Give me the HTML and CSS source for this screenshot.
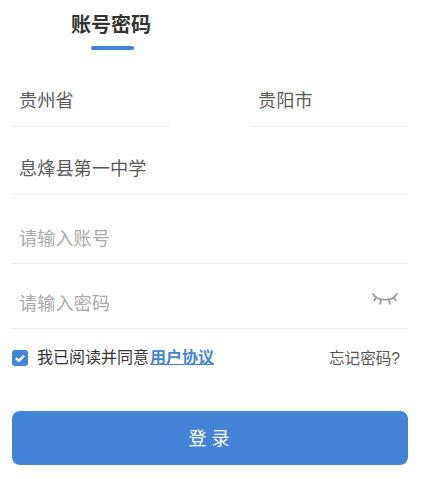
FILE: index.html
```html
<!DOCTYPE html>
<html lang="zh">
<head>
<meta charset="utf-8">
<title>账号密码</title>
<link rel="stylesheet" href="styles.css">
</head>
<body>
<main class="login">
  <div class="tabs">
    <div class="tab">账号密码</div>
  </div>
  <div class="row row-split row-first">
    <div class="field field-half"><span class="value">贵州省</span></div>
    <div class="field field-half field-right"><span class="value">贵阳市</span></div>
  </div>
  <div class="field row-school"><span class="value">息烽县第一中学</span></div>
  <div class="field row-account"><span class="placeholder">请输入账号</span></div>
  <div class="field row-password">
    <span class="placeholder">请输入密码</span>
    <svg class="eye" width="26" height="13" viewBox="0 0 26 13" fill="none" stroke="#999" stroke-width="1.700">
      <path d="M1.500 1.500C6 8.500 20 8.500 24.500 1.500"/>
      <path d="M1.500 1.500L0.500 0.300M24.500 1.500L25.500 0.300M4 4.500L2 8M22 4.500L24 8M9 6.500L8.200 11.500M17 6.500L17.800 11.500"/>
    </svg>
  </div>
  <div class="agree">
    <span class="check">
      <svg width="16" height="16" viewBox="0 0 16 16" fill="none" stroke="#fff" stroke-width="2.400"><path d="M3.800 8.200L6.800 10.800L12.200 5.500"/></svg>
    </span>
    <span class="agree-text">我已阅读并同意</span>
    <a class="link">用户协议</a>
    <span class="forgot">忘记密码?</span>
  </div>
  <button class="submit">登 录</button>
</main>
</body>
</html>
```
FILE: styles.css
```css
* { box-sizing: border-box; }
html, body { margin: 0; background: #fff; }
body {
  font-family: "Liberation Sans", "Noto Sans CJK SC", sans-serif;
  color: #555;
}
.login { width: 428px; height: 479px; padding: 0 20px 0 12px; }
.tabs { height: 50px; padding-left: 59px; }
.tab {
  width: 80px;
  padding-top: 11px;
  height: 50px;
  font-size: 20px;
  line-height: 28px;
  font-weight: 700;
  color: #333;
  text-align: center;
  white-space: nowrap;
  position: relative;
}
.tab::after {
  content: "";
  position: absolute;
  left: 20px;
  bottom: 0;
  width: 43px;
  height: 4px;
  border-radius: 2px;
  background: #4484d6;
}
.field {
  display: flex;
  align-items: center;
  justify-content: space-between;
  padding-left: 7px;
  border-bottom: 1px solid #eee;
  font-size: 18.200px;
}
.row-split { display: flex; justify-content: space-between; }
.row-first { height: 77px; }
.field-half { width: 158px; height: 77px; padding-top: 21px; }
.field-right { width: 157px; }
.row-school { height: 68px; padding-top: 13px; }
.row-account { height: 69px; padding-top: 15px; }
.row-password { height: 65px; padding-top: 11px; padding-right: 10px; }
.eye { margin-top: -4px; }
.value { color: #5a5a5a; }
.placeholder { color: #aaa; }
.agree {
  display: flex;
  align-items: center;
  height: 58px;
  font-size: 16px;
}
.check {
  width: 16px;
  height: 16px;
  border-radius: 3px;
  background: #4484d6;
  display: block;
  margin-right: 9px;
}
.check svg { display: block; }
.agree-text { color: #333; margin-top: -4px; }
.link {
  margin-left: 1px;
  margin-top: -4px;
  font-size: 16px;
  font-weight: 700;
  color: #4484d6;
  text-decoration: underline;
}
.forgot { margin-left: auto; margin-top: -3px; padding-right: 8px; font-size: 15.600px; color: #555; }
.submit {
  display: block;
  width: 396px;
  height: 54px;
  margin-top: 24px;
  padding: 0 2px 3px 0;
  border: 0;
  border-radius: 8px;
  background: #4484d6;
  color: #fff;
  font-family: inherit;
  font-size: 18px;
}
```
